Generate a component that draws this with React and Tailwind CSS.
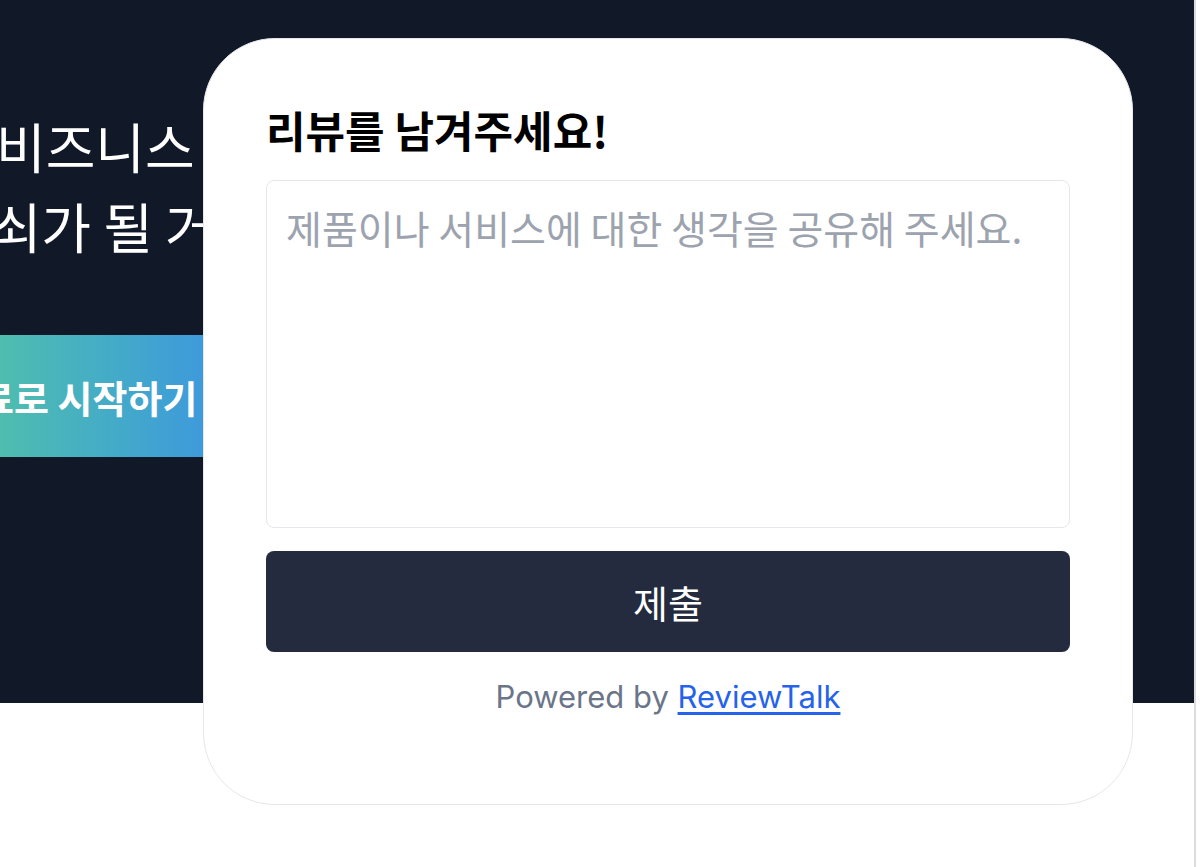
import { useState } from 'react'

const KR = 'font-["Noto_Sans_CJK_KR","Noto_Sans",sans-serif]'

// Review widget floating over the landing hero (embedded preview).
function ReviewCard() {
  const [text, setText] = useState('')

  return (
    <div className={`absolute left-[203px] top-[38px] flex h-[767px] w-[930px] flex-col rounded-[72px] border border-gray-200 bg-white px-[62px] pt-[64px] ${KR}`}>
      <h2 className="text-[43px] font-bold leading-[52px] text-black">리뷰를 남겨주세요!</h2>
      <textarea
        value={text}
        onChange={(e) => setText(e.target.value)}
        placeholder="제품이나 서비스에 대한 생각을 공유해 주세요."
        className="mt-[25px] h-[348px] w-full resize-none rounded-lg border border-gray-200 px-[19px] py-[18px] text-[39px] leading-[56px] text-gray-800 outline-none placeholder:text-[#9ca3af]"
      />
      <button className="mt-[23px] h-[101px] w-full rounded-lg bg-[#252b3e] text-[38px] font-normal text-white">제출</button>
      <p className='mt-[22px] text-center font-["Inter","Liberation_Sans",sans-serif] text-[31px] leading-[45px] text-[#6b7589]'>
        Powered by{' '}
        <a href="#" className="text-[#2563eb] underline underline-offset-4">
          ReviewTalk
        </a>
      </p>
    </div>
  )
}

export default function App() {
  return (
    <div className="flex h-[867px] w-[1200px] overflow-hidden bg-white">
      <div className="relative flex-1">
        <section className={`h-[703px] overflow-hidden bg-[#111827] pt-[106px] ${KR}`}>
          <h1 className="-ml-[4px] whitespace-nowrap text-[54px] font-normal leading-[80px] text-white">
            <div>비즈니스 성장의</div>
            <div className="-ml-[54px]">열쇠가 될 거예요</div>
          </h1>
          <button className="-ml-[56px] mt-[69px] flex h-[122px] w-[330px] items-center bg-linear-to-r from-[#56c6a0] to-[#3c8ce8] text-[38px] font-bold text-white">
            무료로 시작하기
          </button>
        </section>
        <ReviewCard />
      </div>
      <div className="w-[6px] border-l-2 border-[#dcdcdc] bg-white" />
    </div>
  )
}
